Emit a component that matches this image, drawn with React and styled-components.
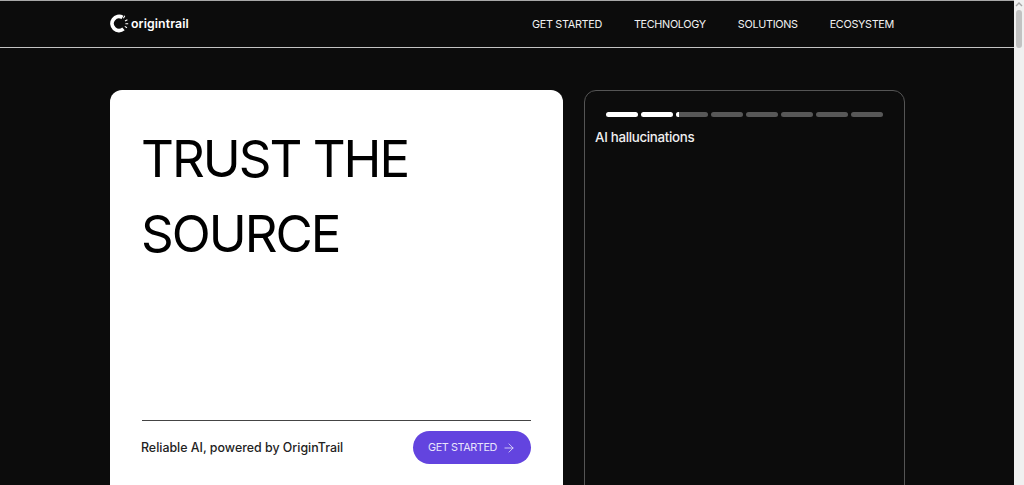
import styled, { createGlobalStyle } from 'styled-components'
import { ArrowRight } from 'lucide-react'

const GlobalStyle = createGlobalStyle`
    html, body, #root {
        margin: 0;
        height: 100%;
        overflow: hidden;
    }
    body {
        background: #0c0c0c;
        font-family: Inter, "Liberation Sans", sans-serif;
    }
`

const Page = styled.div`
    display: grid;
    grid-template-columns: 1fr 10px;
    height: 100vh;
`

const Content = styled.div`
    overflow: hidden;
    box-sizing: border-box;
    border-top: 1px solid #a8a8a8;
    background: #0c0c0c;
`

const ScrollRail = styled.div`
    display: flex;
    flex-direction: column;
    align-items: center;
    padding-top: 2px;
    background: #f0f0f0;
`

const ScrollThumb = styled.div`
    width: 6px;
    height: 38px;
    margin-top: 3px;
    border-radius: 3px;
    background: #c2c2c2;
`

const Header = styled.header`
    display: flex;
    justify-content: space-between;
    align-items: center;
    box-sizing: border-box;
    height: 47px;
    padding: 0 120px 0 110px;
    border-bottom: 1px solid #c4c4c4;
`

const Logo = styled.a`
    display: flex;
    align-items: center;
    gap: 2px;
    color: #fff;
    font-size: 12.3px;
    font-weight: 600;
    letter-spacing: 0.1px;
    font-family: Inter, sans-serif;
    margin-top: -2px;
`

const Nav = styled.nav`
    display: flex;
    gap: 32px;
    padding-top: 1px;
`

const NavLink = styled.a`
    color: #f2f2f2;
    font-size: 10.8px;
    font-weight: 400;
    line-height: 14px;
    letter-spacing: -0.3px;
`

const Main = styled.main`
    display: grid;
    grid-template-columns: 453px 321px;
    gap: 21px;
    padding: 42px 0 0 110px;
`

const HeroCard = styled.section`
    display: flex;
    flex-direction: column;
    box-sizing: border-box;
    height: 440px;
    padding: 31px 32px 0;
    border-radius: 12px;
    background: #fff;
`

const Title = styled.h1`
    flex: 1;
    margin: 0 0 0 -1px;
    color: #000;
    font-family: Inter, sans-serif;
    font-size: 51px;
    font-weight: 400;
    line-height: 75px;
    letter-spacing: -2px;
`

const Footer = styled.div`
    display: flex;
    justify-content: space-between;
    align-items: center;
    padding-top: 10px;
    margin-bottom: 66px;
    border-top: 1px solid #444;
`

const Tagline = styled.p`
    margin: 0 0 0 -1px;
    color: #222;
    font-size: 12.4px;
    font-weight: 500;
`

const CtaButton = styled.a`
    display: flex;
    justify-content: center;
    align-items: center;
    gap: 5px;
    box-sizing: border-box;
    width: 118px;
    height: 33px;
    border-radius: 17px;
    background: #6344df;
    color: #e8e4fb;
    font-size: 10.8px;
    letter-spacing: -0.4px;
`

const StoryCard = styled.section`
    box-sizing: border-box;
    height: 640px;
    padding: 21px 11px;
    border: 1px solid #555;
    border-radius: 12px;
`

const Progress = styled.div`
    display: flex;
    gap: 3px;
    margin-left: 10px;
`

const Segment = styled.div`
    width: 32px;
    height: 5px;
    border-radius: 3px;
    overflow: hidden;
    background: #585858;
`

const SegmentFill = styled.div`
    height: 100%;
    background: #fff;
`

const Caption = styled.p`
    margin: 10px 0 0 -1px;
    color: #f0f0f0;
    font-size: 13.3px;
    font-weight: 500;
    line-height: 20px;
    letter-spacing: -0.3px;
`

const segments = [100, 100, 8, 0, 0, 0, 0, 0]

export default function App() {
    return <>
        <GlobalStyle />
        <Page>
            <Content>
                <Header>
                    <Logo>
                        <svg width="19" height="19" viewBox="0 0 19 19" fill="none">
                            <path d="M12.5 3.4A7 7 0 1 0 13.5 14.9" stroke="#fff" strokeWidth="3.8" />
                            <path d="M13.4 4.2L14.8 1.8M15 7L17.4 5.8M15.4 9.8H18.2M14.8 12.4L17 13.8" stroke="#fff" strokeWidth="1.1" />
                        </svg>
                        origintrail
                    </Logo>
                    <Nav>
                        <NavLink>GET STARTED</NavLink>
                        <NavLink>TECHNOLOGY</NavLink>
                        <NavLink>SOLUTIONS</NavLink>
                        <NavLink>ECOSYSTEM</NavLink>
                    </Nav>
                </Header>
                <Main>
                    <HeroCard>
                        <Title>TRUST THE<br />SOURCE</Title>
                        <Footer>
                            <Tagline>Reliable AI, powered by OriginTrail</Tagline>
                            <CtaButton>GET STARTED <ArrowRight size={14} strokeWidth={1.4} /></CtaButton>
                        </Footer>
                    </HeroCard>
                    <StoryCard>
                        <Progress>
                            {segments.map((fill, i) => <Segment key={i}>
                                <SegmentFill style={{ width: `${fill}%` }} />
                            </Segment>)}
                        </Progress>
                        <Caption>AI hallucinations</Caption>
                    </StoryCard>
                </Main>
            </Content>
            <ScrollRail>
                <svg width="8" height="5" viewBox="0 0 8 5" fill="none">
                    <path d="M1 4L4 1L7 4" stroke="#a6a6a6" strokeWidth="1.4" />
                </svg>
                <ScrollThumb />
            </ScrollRail>
        </Page>
    </>
}
